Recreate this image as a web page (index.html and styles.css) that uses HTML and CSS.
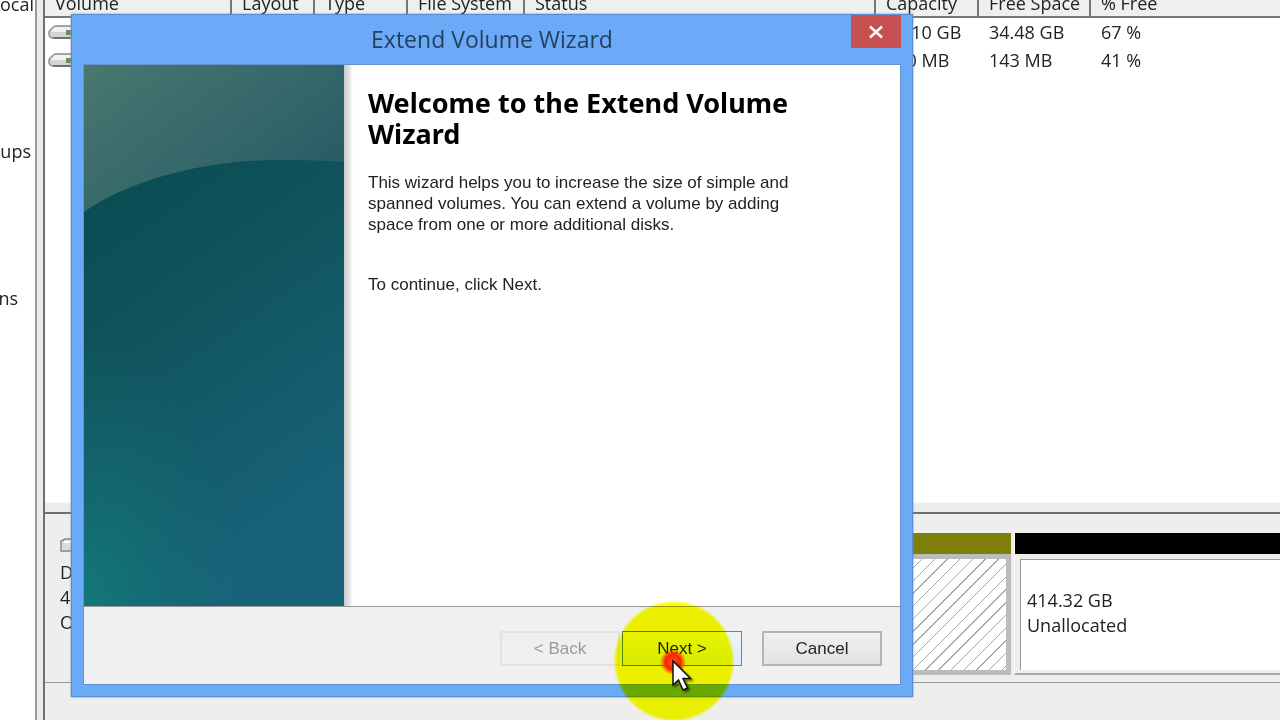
FILE: index.html
```html
<!DOCTYPE html>
<html lang="en">
<head>
<meta charset="utf-8">
<title>Extend Volume Wizard</title>
<link rel="stylesheet" href="styles.css">
</head>
<body>
<div class="app">
  <nav class="tree">
    <ul class="tree-list">
      <li class="tree-item">ocal</li>
      <li class="tree-item tree-item-mid">oups</li>
      <li class="tree-item tree-item-short">ns</li>
    </ul>
  </nav>
  <div class="splitter"></div>
  <main class="main">
    <section class="list-pane">
      <table class="volumes">
        <colgroup>
          <col class="col-volume"><col class="col-layout"><col class="col-type"><col class="col-fs">
          <col class="col-status"><col class="col-capacity"><col class="col-free"><col>
        </colgroup>
        <thead>
          <tr><th>Volume</th><th>Layout</th><th>Type</th><th>File System</th><th>Status</th><th>Capacity</th><th>Free Space</th><th>% Free</th></tr>
        </thead>
        <tbody>
          <tr>
            <td class="drive-cell"><svg class="drive" viewBox="0 0 32 16" width="32" height="16"><path d="M7 2h23v12H6q-5 0-5-4V8q1-3 6-6z" fill="#d4d4d2" stroke="#8a8a8a" stroke-width="1.400"/><path d="M7 3h23v5H3z" fill="#f2f2f2"/><path d="M18 6h8v5h-8z" fill="#6d8f62"/><path d="M5 14h25" stroke="#666" stroke-width="1.600"/></svg></td>
            <td></td><td></td><td></td><td></td><td>51.10 GB</td><td>34.48 GB</td><td>67 %</td>
          </tr>
          <tr>
            <td class="drive-cell"><svg class="drive" viewBox="0 0 32 16" width="32" height="16"><path d="M7 2h23v12H6q-5 0-5-4V8q1-3 6-6z" fill="#d4d4d2" stroke="#8a8a8a" stroke-width="1.400"/><path d="M7 3h23v5H3z" fill="#f2f2f2"/><path d="M18 6h8v5h-8z" fill="#6d8f62"/><path d="M5 14h25" stroke="#666" stroke-width="1.600"/></svg></td>
            <td></td><td></td><td></td><td></td><td>350 MB</td><td>143 MB</td><td>41 %</td>
          </tr>
        </tbody>
      </table>
    </section>
    <div class="pane-divider"></div>
    <section class="disk-row">
      <div class="disk-label">
        <svg class="disk-icon" viewBox="0 0 30 14" width="30" height="14"><path d="M1 3 5 1h24v12H1z" fill="#dcdcdc" stroke="#888" stroke-width="1.400"/><path d="M4 4h25" stroke="#fff" stroke-width="2"/></svg>
        <span>Disk 0</span><span>465 GB</span><span>Online</span>
      </div>
      <div class="partition partition-primary">
        <div class="bar bar-primary"></div>
        <div class="partition-body hatched"></div>
      </div>
      <div class="partition partition-free">
        <div class="bar bar-free"></div>
        <div class="partition-body free-body"><span>414.32 GB</span><span>Unallocated</span></div>
      </div>
    </section>
    <div class="disk-rest"></div>
  </main>
</div>

<div class="dialog" role="dialog" aria-labelledby="dialog-title">
  <header class="titlebar">
    <span class="title" id="dialog-title">Extend Volume Wizard</span>
    <button class="close" type="button" aria-label="Close"><svg viewBox="0 0 14 14" width="14" height="14"><path d="M1 1.500l12 11M13 1.500l-12 11" stroke="#fff" stroke-width="2.400"/></svg></button>
  </header>
  <div class="client">
    <div class="page">
      <svg class="banner" viewBox="0 0 260 541" preserveAspectRatio="none" aria-hidden="true">
        <defs>
          <linearGradient id="top" x1="0" y1="0" x2="1" y2="1"><stop offset="0" stop-color="#48786f"/><stop offset=".5" stop-color="#34656a"/><stop offset="1" stop-color="#195361"/></linearGradient>
          <linearGradient id="deep" x1="0" y1="0" x2=".4" y2="1"><stop offset="0" stop-color="#074c51"/><stop offset=".35" stop-color="#10525b"/><stop offset="1" stop-color="#18637a"/></linearGradient>
          <radialGradient id="glow" cx="0" cy="1" r=".6"><stop offset="0" stop-color="#12807d" stop-opacity=".75"/><stop offset="1" stop-color="#12706d" stop-opacity="0"/></radialGradient>
        </defs>
        <rect width="260" height="200" fill="url(#top)"/>
        <path d="M0 147C50 112 130 94 200 95Q235 95 260 97V541H0z" fill="url(#deep)"/>
        <path d="M0 147C50 112 130 94 200 95Q235 95 260 97V541H0z" fill="url(#glow)"/>
      </svg>
      <div class="content">
        <h1 class="heading">Welcome to the Extend Volume Wizard</h1>
        <p class="text">This wizard helps you to increase the size of simple and spanned volumes. You can extend a volume by adding space from one or more additional disks.</p>
        <p class="text text-next">To continue, click Next.</p>
      </div>
    </div>
    <footer class="footer">
      <button class="btn" type="button" disabled>&lt; Back</button>
      <button class="btn btn-default" type="button">Next &gt;</button>
      <button class="btn btn-cancel" type="button">Cancel</button>
    </footer>
  </div>
</div>

<div class="click-halo"></div>
<div class="click-dot"></div>
<svg class="pointer" viewBox="0 0 24 34" width="24" height="34" aria-hidden="true"><path d="M2 2v24l5.500-5 4.500 10 4.500-2-4.500-9.500h7.500z" fill="#fff" stroke="#111" stroke-width="1.500"/></svg>
</body>
</html>
```

FILE: styles.css
```css
* { box-sizing: border-box; }

body {
  margin: 0;
  height: 100vh;
  overflow: hidden;
  position: relative;
  font: 18px/25px "Open Sans", "Noto Sans", sans-serif;
  color: #222;
  background: #fff;
}

.app { display: flex; height: 100%; }

.tree { flex: 0 0 35px; overflow: hidden; }
.tree-list { list-style: none; margin: -8px 0 0; padding: 0; }
.tree-item {
  display: flex;
  justify-content: flex-end;
  height: 147px;
  padding-right: 1px;
}
.tree-item-mid { padding-right: 4px; }
.tree-item-short { padding-right: 17px; }

.splitter {
  flex: 0 0 10px;
  background: #ececec;
  border-left: 2px solid #999;
  border-right: 2px solid #707070;
}

.main {
  flex: 1;
  min-width: 0;
  display: flex;
  flex-direction: column;
  background: #eee;
}

.list-pane { flex: 1; overflow: hidden; background: #fff; }

.volumes {
  width: 100%;
  margin-top: -11px;
  table-layout: fixed;
  border-collapse: separate;
  border-spacing: 0;
}
.volumes th {
  height: 29px;
  padding: 2px 0 0 10px;
  text-align: left;
  font-weight: 400;
  white-space: nowrap;
  background: #f0eff0;
  border-right: 2px solid #777;
  border-bottom: 2px solid #777;
}
.volumes th:last-child { border-right: 0; }
.volumes td { height: 28px; padding: 0 0 0 10px; white-space: nowrap; }
.volumes .drive-cell { padding-left: 3px; }
.drive { display: block; }
.col-volume { width: 187px; }
.col-layout { width: 83px; }
.col-type { width: 93px; }
.col-fs { width: 117px; }
.col-status { width: 351px; }
.col-capacity { width: 103px; }
.col-free { width: 112px; }

.pane-divider {
  height: 12px;
  background: #ececec;
  border-top: 1px solid #f8f8f8;
  border-bottom: 2px solid #707070;
}

.disk-row {
  display: flex;
  gap: 3px;
  padding-top: 19px;
  height: 169px;
  border-bottom: 1px solid #999;
}
.disk-label {
  flex: 0 0 157px;
  display: flex;
  flex-direction: column;
  padding: 5px 0 0 15px;
}
.disk-icon { margin-bottom: 8px; }

.partition { display: flex; flex-direction: column; height: 142px; }
.partition-primary { flex: 0 0 806px; }
.partition-free { flex: 1; border-left: 1px solid #fff; border-bottom: 2px solid #aaa; }
.bar { height: 21px; }
.bar-primary { background: #7f7f0a; }
.bar-free { background: #000; }
.partition-body { flex: 1; }
.hatched {
  border: 5px solid #bcbcbc;
  background: repeating-linear-gradient(135deg, #fff 0 8px, #aaa 8px 9px);
}
.free-body {
  display: flex;
  flex-direction: column;
  justify-content: center;
  margin: 5px 0 3px 5px;
  padding: 0 0 4px 6px;
  border-left: 1px solid #999;
  border-top: 1px solid #999;
  background: #fff;
}
.disk-rest { height: 37px; }

.dialog {
  position: absolute;
  left: 71px;
  top: 14px;
  width: 842px;
  padding: 0 11px 11px;
  background: #6baaf7;
  border: 1px solid #5a8cd0;
  box-shadow: 0 0 2px #6b8fc0;
}
.titlebar {
  display: grid;
  grid-template-columns: 50px 1fr 50px;
  height: 49px;
}
.title {
  grid-column: 2;
  align-self: center;
  text-align: center;
  padding-bottom: 2px;
  font-size: 23px;
  line-height: 32px;
  color: #25405f;
}
.close {
  display: grid;
  place-items: center;
  height: 33px;
  padding: 0;
  border: 0;
  background: #c75050;
}

.client { border: 1px solid #6593cf; background: #f0f0f0; }
.page {
  display: flex;
  min-height: 542px;
  background: #fff;
  border-bottom: 1px solid #999;
}
.banner { flex: 0 0 260px; width: 260px; height: 541px; }
.content {
  flex: 1;
  padding: 22px 90px 0 24px;
  background: linear-gradient(90deg, #c8c8c8, #e2e2e2 5px, #fff 9px);
}
.heading {
  margin: 0 0 23px;
  font: bold 27px/31px "Noto Sans", "Open Sans", sans-serif;
  color: #000;
}
.text {
  margin: 0;
  font: 17px/21px "Liberation Sans", Arial, sans-serif;
  color: #222;
}
.text-next { margin-top: 39px; }

.footer {
  display: flex;
  justify-content: flex-end;
  gap: 2px;
  padding: 24px 18px 18px;
}
.btn {
  width: 120px;
  height: 35px;
  padding: 0;
  font: 17px/24px "Liberation Sans", Arial, sans-serif;
  color: #222;
  background: linear-gradient(#f0f0f0, #e3e3e3);
  border: 2px solid #b4b4b4;
}
.btn:disabled { color: #999; background: #efefef; border-color: #e2e2e2; }
.btn-default { background: linear-gradient(#ecf4fc, #dcecfc); border: 1px solid #4f86d8; }
.btn-cancel { margin-left: 18px; }

.click-halo {
  position: absolute;
  left: 613px;
  top: 600px;
  width: 122px;
  height: 122px;
  border-radius: 50%;
  background: radial-gradient(closest-side, #fbff00 94%, transparent);
  mix-blend-mode: multiply;
}
.click-dot {
  position: absolute;
  left: 660px;
  top: 649px;
  width: 26px;
  height: 26px;
  border-radius: 50%;
  background: radial-gradient(closest-side, #ff5030, #fa2400 60%, transparent);
}
.pointer { position: absolute; left: 671px; top: 659px; filter: drop-shadow(2px 2px 1px #0008); }
```
